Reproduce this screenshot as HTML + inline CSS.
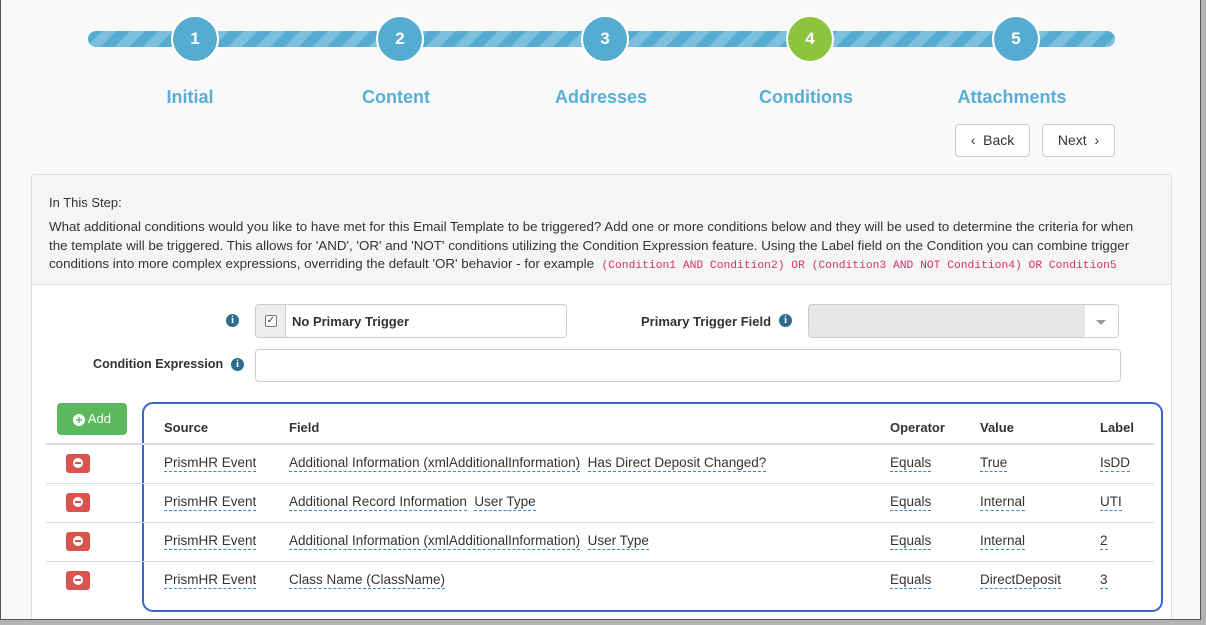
<!DOCTYPE html>
<html><head><meta charset="utf-8"><style>
*{margin:0;padding:0;box-sizing:border-box}
body{width:1206px;height:625px;background:#b4b4b4;position:relative;overflow:hidden;font-family:"Liberation Sans",sans-serif;color:#333}
#frame{position:absolute;left:0;top:0;width:1201px;height:620px;background:#f9f9f9;border:1px solid #555;border-top:none;overflow:hidden}
.a{position:absolute}
.bar{left:87px;top:31px;width:1027px;height:16px;border-radius:8px;background:repeating-linear-gradient(135deg,#56acd0 0 10px,#7cc0de 10px 20px)}
.c{width:48px;height:48px;border-radius:50%;background:#56acd0;border:2px solid #fff;color:#fff;font-weight:bold;font-size:17px;text-align:center;line-height:44px;top:15px}
.lbl{top:87px;font-weight:bold;font-size:18px;color:#58afd5;width:200px;text-align:center}
.btn{top:124px;height:33px;border:1px solid #ccc;border-radius:4px;background:#fff;font-size:14px;color:#333;line-height:31px;text-align:center}
.panel{left:30px;top:174px;width:1141px;height:460px;border:1px solid #ddd;border-radius:4px;background:#fff}
.hd{left:0;top:0;width:1139px;height:110px;background:#f5f5f5;border-bottom:1px solid #ddd}
.t{font-size:13.5px;color:#333;white-space:nowrap}
code{font-family:"Liberation Mono",monospace;color:#d6336c;font-size:11.3px}
.inp{border:1px solid #ccc;border-radius:4px;background:#fff}
.info{width:13px;height:13px;border-radius:50%;background:#2a6d8f;color:#fff;font-size:10px;font-weight:bold;text-align:center;line-height:13px;font-family:"Liberation Serif",serif}
.b{font-weight:bold;font-size:13px;color:#333}
.u{border-bottom:1px dashed #2a8fd0;padding-bottom:1px}
.rm{width:24px;height:19px;background:#d9534f;border-radius:3px}
.rm:after{content:"";position:absolute;left:7px;top:4px;width:10px;height:10px;border-radius:50%;background:#fff}
.rm:before{content:"";position:absolute;left:9px;top:8px;width:6px;height:2px;background:#d9534f;z-index:2}
.line{left:14px;width:1108px;height:1px;background:#ddd}
</style></head><body>
<div id="frame">
<div class="a bar"></div>
<div class="a c" style="left:170px">1</div>
<div class="a c" style="left:375px">2</div>
<div class="a c" style="left:580px">3</div>
<div class="a c" style="left:785px;background:#8cc43e">4</div>
<div class="a c" style="left:991px">5</div>
<div class="a lbl" style="left:89px">Initial</div>
<div class="a lbl" style="left:295px">Content</div>
<div class="a lbl" style="left:500px">Addresses</div>
<div class="a lbl" style="left:705px">Conditions</div>
<div class="a lbl" style="left:911px">Attachments</div>
<div class="a btn" style="left:954px;width:75px">&#8249;&nbsp; Back</div>
<div class="a btn" style="left:1041px;width:73px">Next &nbsp;&#8250;</div>
<div class="a panel">
 <div class="a hd">
  <div class="a t" style="left:17px;top:20px;font-size:13px">In This Step:</div>
  <div class="a t" style="left:17px;top:43px;line-height:18.5px;font-size:13.35px">What additional conditions would you like to have met for this Email Template to be triggered? Add one or more conditions below and they will be used to determine the criteria for when<br>the template will be triggered. This allows for 'AND', 'OR' and 'NOT' conditions utilizing the Condition Expression feature. Using the Label field on the Condition you can combine trigger<br>conditions into more complex expressions, overriding the default 'OR' behavior - for example &nbsp;<code>(Condition1 AND Condition2) OR (Condition3 AND NOT Condition4) OR Condition5</code></div>
 </div>
 <div class="a info" style="left:194px;top:139px">i</div>
 <div class="a inp" style="left:223px;top:129px;width:312px;height:34px;overflow:hidden">
  <div class="a" style="left:0;top:0;width:30px;height:32px;background:#eee;border-right:1px solid #ccc"></div>
  <div class="a" style="left:9px;top:10px;width:12px;height:12px;border:1px solid #777;border-radius:2px;background:#fff;font-size:10px;line-height:10px;text-align:center">&#10003;</div>
  <div class="a b" style="left:36px;top:9px">No Primary Trigger</div>
 </div>
 <div class="a b" style="left:609px;top:139px">Primary Trigger Field</div>
 <div class="a info" style="left:747px;top:139px">i</div>
 <div class="a inp" style="left:776px;top:129px;width:311px;height:34px;background:#e6e6e6;overflow:hidden">
  <div class="a" style="right:0;top:0;width:33px;height:32px;background:#fff"></div>
  <div class="a" style="right:12px;top:15px;border-left:5px solid transparent;border-right:5px solid transparent;border-top:5px solid #999"></div>
 </div>
 <div class="a b" style="left:61px;top:182px;font-size:12.6px">Condition Expression</div>
 <div class="a info" style="left:199px;top:183px">i</div>
 <div class="a inp" style="left:223px;top:174px;width:866px;height:33px"></div>
 <div class="a" style="left:25px;top:228px;width:70px;height:32px;background:#5cb85c;border-radius:4px;color:#fff;font-size:13px;line-height:32px;text-align:center"><span style="display:inline-block;width:12px;height:12px;border-radius:50%;background:#fff;color:#5cb85c;font-weight:bold;font-size:12px;line-height:12px;vertical-align:-1px">+</span> Add</div>
 <div class="a" style="left:110px;top:227px;width:1021px;height:210px;border:2px solid #3c64d9;border-radius:11px"></div>
 <div class="a b" style="left:132px;top:245px">Source</div>
 <div class="a b" style="left:257px;top:245px">Field</div>
 <div class="a b" style="left:858px;top:245px">Operator</div>
 <div class="a b" style="left:948px;top:245px">Value</div>
 <div class="a b" style="left:1068px;top:245px">Label</div>
 <div class="a line" style="top:268px;height:2px"></div>
 <div class="a line" style="top:308px"></div>
 <div class="a line" style="top:347px"></div>
 <div class="a line" style="top:386px"></div>
 <div class="a rm" style="left:34px;top:279px"></div>
 <div class="a rm" style="left:34px;top:318px"></div>
 <div class="a rm" style="left:34px;top:357px"></div>
 <div class="a rm" style="left:34px;top:396px"></div>
 <div class="a t" style="left:132px;top:280px"><span class="u">PrismHR Event</span></div>
 <div class="a t" style="left:257px;top:280px"><span class="u">Additional Information (xmlAdditionalInformation)</span>&nbsp; <span class="u">Has Direct Deposit Changed?</span></div>
 <div class="a t" style="left:858px;top:280px"><span class="u">Equals</span></div>
 <div class="a t" style="left:948px;top:280px"><span class="u">True</span></div>
 <div class="a t" style="left:1068px;top:280px"><span class="u">IsDD</span></div>
 <div class="a t" style="left:132px;top:319px"><span class="u">PrismHR Event</span></div>
 <div class="a t" style="left:257px;top:319px"><span class="u">Additional Record Information</span>&nbsp; <span class="u">User Type</span></div>
 <div class="a t" style="left:858px;top:319px"><span class="u">Equals</span></div>
 <div class="a t" style="left:948px;top:319px"><span class="u">Internal</span></div>
 <div class="a t" style="left:1068px;top:319px"><span class="u">UTI</span></div>
 <div class="a t" style="left:132px;top:358px"><span class="u">PrismHR Event</span></div>
 <div class="a t" style="left:257px;top:358px"><span class="u">Additional Information (xmlAdditionalInformation)</span>&nbsp; <span class="u">User Type</span></div>
 <div class="a t" style="left:858px;top:358px"><span class="u">Equals</span></div>
 <div class="a t" style="left:948px;top:358px"><span class="u">Internal</span></div>
 <div class="a t" style="left:1068px;top:358px"><span class="u">2</span></div>
 <div class="a t" style="left:132px;top:397px"><span class="u">PrismHR Event</span></div>
 <div class="a t" style="left:257px;top:397px"><span class="u">Class Name (ClassName)</span></div>
 <div class="a t" style="left:858px;top:397px"><span class="u">Equals</span></div>
 <div class="a t" style="left:948px;top:397px"><span class="u">DirectDeposit</span></div>
 <div class="a t" style="left:1068px;top:397px"><span class="u">3</span></div>
</div>
</div>
</body></html>
